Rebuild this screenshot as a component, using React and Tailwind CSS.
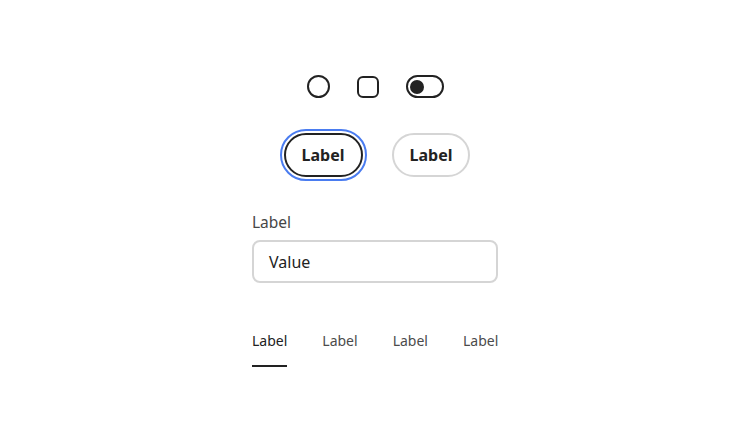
import React from "react";

const App = () => {
  return (
    <div
      className="w-[750px] h-[441px] bg-white flex flex-col items-center text-[#222222]"
      style={{ fontFamily: '"Noto Sans", "Open Sans", sans-serif' }}
    >
      {/* Controls */}
      <div className="mt-[75px] flex items-center gap-[27px]">
        <div className="w-[23px] h-[23px] rounded-full border-2 border-[#222222]" />
        <div className="w-[22px] h-[22px] rounded-[6px] border-2 border-[#222222]" />
        <div className="w-[38px] h-[23px] rounded-full border-2 border-[#222222] flex items-center px-[2px]">
          <div className="w-[14px] h-[14px] rounded-full bg-[#222222]" />
        </div>
      </div>

      {/* Buttons */}
      <div className="mt-[31px] flex items-center gap-[25px]">
        <div className="p-[2px] rounded-full border-2 border-[#4a7cf0]">
          <button className="h-[44px] px-[16px] rounded-full border-2 border-[#222222] text-[16px] font-bold">
            Label
          </button>
        </div>
        <button className="h-[44px] px-[16px] rounded-full border-2 border-[#d5d5d5] text-[16px] font-bold">
          Label
        </button>
      </div>

      {/* Field */}
      <div className="mt-[30px] w-[246px] flex flex-col">
        <label className="text-[15.5px] text-[#464646] leading-[22px]">Label</label>
        <div className="mt-[7px] h-[43px] rounded-[8px] border-2 border-[#d5d5d5] flex items-center px-[15px] text-[16px] text-[#222222]">
          Value
        </div>
      </div>

      {/* Tabs */}
      <div className="mt-[48px] w-[246px] flex gap-[35px] text-[14px]">
        <div className="flex flex-col">
          <span className="leading-[20px] text-[#222222]">Label</span>
          <div className="mt-[14px] h-[2px] bg-[#222222]" />
        </div>
        <span className="leading-[20px] text-[#4b4b4b]">Label</span>
        <span className="leading-[20px] text-[#4b4b4b]">Label</span>
        <span className="leading-[20px] text-[#4b4b4b]">Label</span>
      </div>
    </div>
  );
};

export default App;
